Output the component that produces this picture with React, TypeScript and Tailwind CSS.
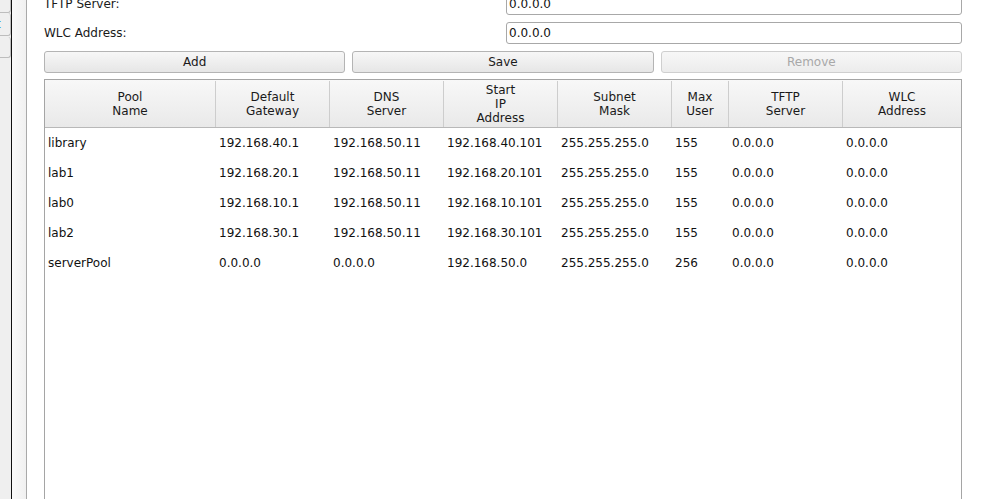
import React from "react"

const headers = [
    ["Pool", "Name"],
    ["Default", "Gateway"],
    ["DNS", "Server"],
    ["Start", "IP", "Address"],
    ["Subnet", "Mask"],
    ["Max", "User"],
    ["TFTP", "Server"],
    ["WLC", "Address"],
]

const rows = [
    ["library", "192.168.40.1", "192.168.50.11", "192.168.40.101", "255.255.255.0", "155", "0.0.0.0", "0.0.0.0"],
    ["lab1", "192.168.20.1", "192.168.50.11", "192.168.20.101", "255.255.255.0", "155", "0.0.0.0", "0.0.0.0"],
    ["lab0", "192.168.10.1", "192.168.50.11", "192.168.10.101", "255.255.255.0", "155", "0.0.0.0", "0.0.0.0"],
    ["lab2", "192.168.30.1", "192.168.50.11", "192.168.30.101", "255.255.255.0", "155", "0.0.0.0", "0.0.0.0"],
    ["serverPool", "0.0.0.0", "0.0.0.0", "192.168.50.0", "255.255.255.0", "256", "0.0.0.0", "0.0.0.0"],
]

const cols = "grid grid-cols-[171px_114px_114px_114px_114px_57px_114px_1fr]"

function Field({ label, value }: { label: string; value: string }) {
    return (
        <div className="grid h-[22px] grid-cols-[462px_1fr] items-center">
            <span className="text-[#1a1a1a]">{label}</span>
            <div className="flex h-[22px] items-center rounded-[3px] border border-[#a8a8a8] bg-white pl-[2px] text-[#111]">
                {value}
            </div>
        </div>
    )
}

function Btn({ label, disabled }: { label: string; disabled?: boolean }) {
    return (
        <div
            className={
                disabled
                    ? "flex h-[22px] items-center justify-center rounded-[3px] border border-[#cfcfcf] bg-gradient-to-b from-[#f7f7f7] to-[#ececec] text-[#a8a8a8]"
                    : "flex h-[22px] items-center justify-center rounded-[3px] border border-[#b4b4b4] bg-gradient-to-b from-[#f7f7f7] to-[#e6e6e6] text-[#1a1a1a]"
            }
        >
            {label}
        </div>
    )
}

export default function App() {
    return (
        <div className="flex h-[499px] w-[982px] overflow-hidden bg-white font-['DejaVu_Sans',sans-serif] text-[12px] leading-[14px]">
            {/* Left strip with clipped tabs */}
            <div className="flex w-[11px] flex-col bg-[#efefef]">
                <div className="h-[13px] rounded-br-[3px] border-r border-b border-[#bdbdbd]" />
                <div className="flex h-[23px] items-center overflow-hidden rounded-r-[3px] border-r border-b border-[#bdbdbd] text-[#1f8ccf]">
                    <span className="-ml-[4px]">t</span>
                </div>
                <div className="mt-[1px] h-[21px] rounded-r-[3px] border-r border-b border-[#bdbdbd]" />
            </div>
            <div className="w-[1px] bg-[#111]" />
            <div className="w-[15px] border-r border-[#a9a9a9] bg-gradient-to-r from-[#fafafa] to-[#f0f0f0]" />

            {/* Main panel */}
            <div className="-mt-[7px] flex flex-1 flex-col gap-[7px] pl-[17px] pr-[20px]">
                <Field label="TFTP Server:" value="0.0.0.0" />
                <Field label="WLC Address:" value="0.0.0.0" />
                <div className="grid grid-cols-3 gap-[7px]">
                    <Btn label="Add" />
                    <Btn label="Save" />
                    <Btn label="Remove" disabled />
                </div>

                <div className="-mt-[1px] h-[440px] shrink-0 border border-[#a5a5a5] bg-white">
                    <div className={`${cols} h-[48px] border-b border-[#b8b8b8] bg-gradient-to-b from-[#f8f8f8] to-[#e9e9e9] pt-[1px] text-[#1a1a1a]`}>
                        {headers.map((h, i) => (
                            <div
                                key={i}
                                className={
                                    i < headers.length - 1
                                        ? "flex flex-col items-center justify-center border-r border-[#cdcdcd] text-center"
                                        : "flex flex-col items-center justify-center text-center"
                                }
                            >
                                {h.map((l) => (
                                    <span key={l}>{l}</span>
                                ))}
                            </div>
                        ))}
                    </div>
                    {rows.map((r) => (
                        <div key={r[0]} className={`${cols} h-[30px] items-center text-[#111]`}>
                            {r.map((c, i) => (
                                <span key={i} className="pl-[3px]">
                                    {c}
                                </span>
                            ))}
                        </div>
                    ))}
                </div>
            </div>
        </div>
    )
}
